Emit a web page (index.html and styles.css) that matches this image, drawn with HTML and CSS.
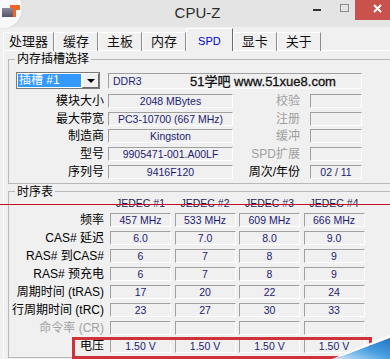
FILE: index.html
```html
<!DOCTYPE html>
<html lang="zh-CN">
<head>
  <meta charset="UTF-8" />
  <title>CPU-Z</title>
  <link rel="stylesheet" href="styles.css">
</head>
<body>
  <div class="window">
    <div class="titlebar">
      <div class="title-left"></div>
      <span class="title">CPU-Z</span>
      <div class="win-btns">
        <span class="win-btn btn-min">
          <svg width="30" height="20" viewBox="0 0 30 20"><rect x="13" y="9" width="8" height="2" fill="#333"/></svg>
        </span>
        <span class="win-btn btn-max">
          <svg width="25" height="20" viewBox="0 0 25 20"><rect x="10.5" y="4.5" width="8" height="7" fill="none" stroke="#8a8a8a"/></svg>
        </span>
        <span class="win-btn btn-close">
          <svg width="45" height="20" viewBox="0 0 45 20"><path d="M19 5 L26 12 M26 5 L19 12" stroke="#fff" stroke-width="2"/></svg>
        </span>
      </div>
    </div>

    <div class="tabs">
      <span class="tab first">处理器</span>
      <span class="tab">缓存</span>
      <span class="tab">主板</span>
      <span class="tab">内存</span>
      <span class="tab active">SPD</span>
      <span class="tab">显卡</span>
      <span class="tab">关于</span>
    </div>

    <div class="panel">
      <fieldset class="group slot-group">
        <legend>内存插槽选择</legend>
        <div class="slot-grid">
          <div class="select">
            <span class="select-value">插槽 #1</span>
            <span class="select-arrow"></span>
          </div>
          <div class="field field-wide">DDR3</div>

          <span class="lbl">模块大小</span>
          <div class="field">2048 MBytes</div>
          <span class="lbl lbl-right dim">校验</span>
          <div class="field"></div>

          <span class="lbl">最大带宽</span>
          <div class="field">PC3-10700 (667 MHz)</div>
          <span class="lbl lbl-right dim">注册</span>
          <div class="field"></div>

          <span class="lbl">制造商</span>
          <div class="field">Kingston</div>
          <span class="lbl lbl-right dim">缓冲</span>
          <div class="field"></div>

          <span class="lbl">型号</span>
          <div class="field">9905471-001.A00LF</div>
          <span class="lbl lbl-right dim">SPD扩展</span>
          <div class="field"></div>

          <span class="lbl">序列号</span>
          <div class="field">9416F120</div>
          <span class="lbl lbl-right">周次/年份</span>
          <div class="field">02 / 11</div>
        </div>
      </fieldset>

      <fieldset class="group timing-group">
        <legend>时序表</legend>
        <div class="timing-grid" id="timings">
          <span></span>
          <span class="col-head">JEDEC #1</span>
          <span class="col-head">JEDEC #2</span>
          <span class="col-head">JEDEC #3</span>
          <span class="col-head">JEDEC #4</span>
        </div>
      </fieldset>
    </div>

    <div class="watermark">51学吧 www.51xue8.com</div>
    <div class="mark-line"></div>
    <div class="mark-box"></div>
    <svg class="swoosh" width="60" height="26" viewBox="0 0 60 26">
      <defs>
        <linearGradient id="sw" x1="0" y1="1" x2="1" y2="0">
          <stop offset="0" stop-color="#cfe6f7"/>
          <stop offset="0.5" stop-color="#4aa0e0"/>
          <stop offset="1" stop-color="#1f6fc4"/>
        </linearGradient>
      </defs>
      <polygon points="2,26 60,4 60,26" fill="url(#sw)"/>
      <polygon points="0,26 60,1 60,4 2,26" fill="#fff"/>
    </svg>
  </div>

  <script>
    const timings = [
      { label: "频率", values: ["457 MHz", "533 MHz", "609 MHz", "666 MHz"] },
      { label: "CAS# 延迟", values: ["6.0", "7.0", "8.0", "9.0"] },
      { label: "RAS# 到CAS#", values: ["6", "7", "8", "9"] },
      { label: "RAS# 预充电", values: ["6", "7", "8", "9"] },
      { label: "周期时间 (tRAS)", values: ["17", "20", "22", "24"] },
      { label: "行周期时间 (tRC)", values: ["23", "27", "30", "33"] },
      { label: "命令率 (CR)", values: ["", "", "", ""], dim: true },
      { label: "电压", values: ["1.50 V", "1.50 V", "1.50 V", "1.50 V"] },
    ];

    const grid = document.getElementById("timings");
    timings.forEach(row => {
      const lbl = document.createElement("span");
      lbl.className = row.dim ? "lbl dim" : "lbl";
      lbl.textContent = row.label;
      grid.appendChild(lbl);
      row.values.forEach(v => {
        const f = document.createElement("div");
        f.className = "field";
        f.textContent = v;
        grid.appendChild(f);
      });
    });
  </script>
</body>
</html>
```

FILE: styles.css
```css
* {
  box-sizing: border-box;
  margin: 0;
  padding: 0;
}

body {
  width: 390px;
  height: 359px;
  overflow: hidden;
  background: #f0f0f0;
  font-family: "Liberation Sans", "Noto Sans CJK SC", sans-serif;
  color: #000;
}

.window {
  position: relative;
  width: 400px;
  height: 359px;
  background: #f0f0f0;
}

/* title bar */
.titlebar {
  position: relative;
  height: 27px;
  background: #e4e4e4;
  display: grid;
  grid-template-columns: 1fr auto 1fr;
  align-items: start;
}

.title-left {
  position: relative;
}

.title-left::before {
  content: "";
  position: absolute;
  left: -14px;
  top: -12px;
  width: 36px;
  height: 40px;
  border-radius: 50%;
  background: #fafafa;
  box-shadow: 0 0 2px rgba(0, 0, 0, 0.15);
}

.title-left::after {
  content: "";
  position: absolute;
  left: 2px;
  top: 8px;
  width: 11px;
  height: 9px;
  background: linear-gradient(#8a8a9c, #54546a);
  border-right: 3px solid #f26522;
  box-shadow: 6px -5px 0 -2px #f26522;
}

.title {
  font-size: 15px;
  line-height: 25px;
  color: #2b2b2b;
  margin-left: -5px;
}

.win-btns {
  justify-self: end;
  display: flex;
  height: 20px;
}

.win-btn svg {
  display: block;
}

.btn-close {
  background: #c9534c;
}

/* tabs */
.tabs {
  position: relative;
  z-index: 1;
  display: flex;
  align-items: flex-end;
  height: 24px;
  padding-left: 3px;
  margin-bottom: -1px;
}

.tab {
  height: 19px;
  line-height: 18px;
  font-size: 13px;
  padding: 0 8px;
  border-left: 1px solid #fff;
  border-top: 1px solid #fff;
  border-right: 1px solid #8c8c8c;
  color: #111;
}

.tab.first {
  padding: 0 5px;
}

.tab.active {
  height: 23px;
  line-height: 24px;
  font-size: 11px;
  padding: 0 11px;
  color: #0000c8;
  background: #f0f0f0;
  border-right-color: #6a6a6a;
}

/* main panel */
.panel {
  margin-left: 3px;
  border-top: 1px solid #fff;
  border-left: 1px solid #fff;
  padding: 0 0 0 4px;
}

.group {
  border: 1px solid #b8b8b8;
  border-right: none;
  min-width: 0;
  padding: 0 0 4px 1px;
}

.group legend {
  font-size: 12px;
  line-height: 16px;
  padding: 0 2px;
  margin-left: 5px;
}

.slot-group {
  padding-top: 5px;
}

.lbl {
  font-size: 12px;
  line-height: 14px;
  text-align: right;
  white-space: nowrap;
}

.dim {
  color: #a0a0a0;
}

.field {
  height: 14px;
  font-size: 10.5px;
  line-height: 12px;
  text-align: center;
  color: #1c1c72;
  white-space: nowrap;
  overflow: hidden;
  border-top: 1px solid #a0a0a0;
  border-left: 1px solid #a0a0a0;
  border-bottom: 1px solid #fff;
  border-right: 1px solid #fff;
}

/* slot selection */
.slot-grid {
  display: grid;
  grid-template-columns: 98px 125px 77px 52px;
  grid-template-rows: 18px repeat(5, 14px);
  row-gap: 3.75px;
}

.slot-grid .lbl {
  padding-right: 4px;
}

.slot-grid .lbl-right {
  padding-right: 10px;
}

.select {
  margin-left: 6px;
  width: 84px;
  height: 17px;
  display: flex;
  border: 1px solid #7a7a7a;
  background: #fff;
}

.select-value {
  flex: 1;
  margin: 1px;
  background: #3399ff;
  color: #fff;
  font-size: 12px;
  line-height: 13px;
  padding-left: 1px;
}

.select-arrow {
  position: relative;
  width: 17px;
  background: #f0f0f0;
  border-left: 1px solid #fff;
  border-top: 1px solid #fff;
  border-right: 1px solid #6a6a6a;
  border-bottom: 1px solid #6a6a6a;
}

.select-arrow::after {
  content: "";
  position: absolute;
  left: 4px;
  top: 5px;
  border-left: 4px solid transparent;
  border-right: 4px solid transparent;
  border-top: 4px solid #000;
}

.field-wide {
  grid-column: 2 / 5;
  margin-top: 1px;
  text-align: left;
  padding-left: 4px;
  line-height: 14px;
  height: 16px;
}

/* timings */
.timing-grid {
  margin-top: -3px;
  display: grid;
  grid-template-columns: 96.5px repeat(4, 61px);
  grid-template-rows: 12px;
  grid-auto-rows: 14px;
  column-gap: 3.5px;
  row-gap: 4px;
}

.timing-grid .lbl {
  padding-right: 2.5px;
}

.col-head {
  font-size: 10.5px;
  line-height: 12px;
  text-align: center;
  color: #1c1c50;
}

/* annotations over the screenshot */
.watermark {
  position: absolute;
  left: 190px;
  top: 73px;
  font-size: 13px;
  line-height: 18px;
  color: #111;
  -webkit-text-stroke: 0.3px #111;
}

.mark-line {
  position: absolute;
  left: 0;
  top: 204px;
  width: 390px;
  height: 1px;
  background: #c0102a;
}

.mark-box {
  position: absolute;
  left: 72px;
  top: 337px;
  width: 300px;
  height: 22px;
  border: 3px solid #d0323a;
}

.swoosh {
  position: absolute;
  left: 332px;
  top: 333px;
}
```
